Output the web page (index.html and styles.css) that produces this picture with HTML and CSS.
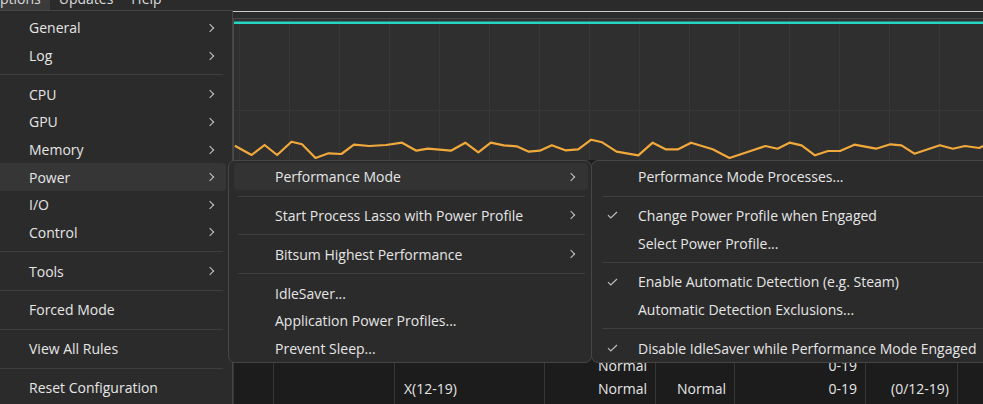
FILE: index.html
```html
<!DOCTYPE html>
<html lang="en">
<head>
    <meta charset="UTF-8">
    <title>Process Lasso - Options</title>
    <link rel="stylesheet" href="styles.css">
</head>
<body>
    <div class="app">
        <div class="menubar">
            <span class="mb-item open">Options</span>
            <span class="mb-item">Updates</span>
            <span class="mb-item">Help</span>
        </div>
        <div class="workspace">
            <div class="sidebar"></div>
            <div class="graph">
                <div class="plot">
                    <svg viewBox="0 0 749 141" preserveAspectRatio="none">
                        <g stroke="#373737" stroke-width="1">
                            <line x1="5.5" y1="0" x2="5.5" y2="141"/>
                            <line x1="55.5" y1="0" x2="55.5" y2="141"/>
                            <line x1="105.5" y1="0" x2="105.5" y2="141"/>
                            <line x1="155.5" y1="0" x2="155.5" y2="141"/>
                            <line x1="205.5" y1="0" x2="205.5" y2="141"/>
                            <line x1="255.5" y1="0" x2="255.5" y2="141"/>
                            <line x1="305.5" y1="0" x2="305.5" y2="141"/>
                            <line x1="355.5" y1="0" x2="355.5" y2="141"/>
                            <line x1="405.5" y1="0" x2="405.5" y2="141"/>
                            <line x1="455.5" y1="0" x2="455.5" y2="141"/>
                            <line x1="505.5" y1="0" x2="505.5" y2="141"/>
                            <line x1="555.5" y1="0" x2="555.5" y2="141"/>
                            <line x1="605.5" y1="0" x2="605.5" y2="141"/>
                            <line x1="655.5" y1="0" x2="655.5" y2="141"/>
                            <line x1="705.5" y1="0" x2="705.5" y2="141"/>
                            <line x1="0" y1="91.5" x2="749" y2="91.5"/>
                        </g>
                        <line x1="0" y1="3.8" x2="749" y2="3.8" stroke="#25d4c3" stroke-width="2.4"/>
                        <polyline fill="none" stroke="#f2a93b" stroke-width="2.2" stroke-linejoin="round"
                            points="0.8,126.7 17.6,136 30.6,126 43.1,136 57.5,122.7 68,125.3 81.5,139 94.5,134.3 107.4,135 119.9,125.7 135.3,127 152.1,126 168,123.7 182.4,131.7 193.9,129.7 216.9,131.7 231.3,123.7 244.3,133.3 256.8,123.7 269.8,126.3 282.7,127.3 294.8,132.7 305.8,131.7 317.8,126.3 331.3,131.3 344.2,130.3 357.2,120.7 368.2,123.3 382.6,132.7 404.3,136.3 418.7,123.7 431.6,130.3 444.1,130.3 457.1,123.7 478.7,130.3 495.5,139 519.5,131 531.5,127 543.5,129.7 555.5,123.7 567.6,126.3 581,136.3 594,132 606,132 620.4,125.7 642,129.7 656.4,125.3 667.5,126.3 680.4,134.7 705.9,126.3 718.9,129.7 730.9,127 745.3,129 749,127"/>
                    </svg>
                </div>
            </div>
        </div>
        <div class="rules">
            <div class="col"></div>
            <div class="col"><div class="cell"></div><div class="cell"></div></div>
            <div class="col"><div class="cell"></div><div class="cell"></div></div>
            <div class="col left"><div class="cell"></div><div class="cell">X(12-19)</div></div>
            <div class="col"><div class="cell">Normal</div><div class="cell">Normal</div></div>
            <div class="col"><div class="cell"></div><div class="cell">Normal</div></div>
            <div class="col"><div class="cell">0-19</div><div class="cell">0-19</div></div>
            <div class="col"><div class="cell"></div><div class="cell">(0/12-19)</div></div>
            <div class="col"></div>
        </div>
    </div>

    <!-- Options menu -->
    <div class="menu main-menu">
        <div class="mi sub">General</div>
        <div class="mi sub">Log</div>
        <div class="sep"></div>
        <div class="mi sub">CPU</div>
        <div class="mi sub">GPU</div>
        <div class="mi sub">Memory</div>
        <div class="mi sub hot">Power</div>
        <div class="mi sub">I/O</div>
        <div class="mi sub">Control</div>
        <div class="sep"></div>
        <div class="mi sub">Tools</div>
        <div class="sep"></div>
        <div class="mi">Forced Mode</div>
        <div class="sep"></div>
        <div class="mi">View All Rules</div>
        <div class="sep"></div>
        <div class="mi">Reset Configuration</div>
    </div>

    <!-- Power submenu -->
    <div class="menu power-menu">
        <div class="si sub hot">Performance Mode</div>
        <div class="sep"></div>
        <div class="si sub">Start Process Lasso with Power Profile</div>
        <div class="sep"></div>
        <div class="si sub">Bitsum Highest Performance</div>
        <div class="sep"></div>
        <div class="si">IdleSaver...</div>
        <div class="si">Application Power Profiles...</div>
        <div class="si">Prevent Sleep...</div>
    </div>

    <!-- Performance Mode submenu -->
    <div class="menu perf-menu">
        <div class="si"><span class="check"></span>Performance Mode Processes...</div>
        <div class="sep"></div>
        <div class="si"><span class="check"><svg viewBox="0 0 11 8" width="11" height="8"><polyline points="1,4.2 3.8,7 10,1" fill="none" stroke="#bdbdbd" stroke-width="1.2"/></svg></span>Change Power Profile when Engaged</div>
        <div class="si"><span class="check"></span>Select Power Profile...</div>
        <div class="sep"></div>
        <div class="si"><span class="check"><svg viewBox="0 0 11 8" width="11" height="8"><polyline points="1,4.2 3.8,7 10,1" fill="none" stroke="#bdbdbd" stroke-width="1.2"/></svg></span>Enable Automatic Detection (e.g. Steam)</div>
        <div class="si"><span class="check"></span>Automatic Detection Exclusions...</div>
        <div class="sep"></div>
        <div class="si"><span class="check"><svg viewBox="0 0 11 8" width="11" height="8"><polyline points="1,4.2 3.8,7 10,1" fill="none" stroke="#bdbdbd" stroke-width="1.2"/></svg></span>Disable IdleSaver while Performance Mode Engaged</div>
    </div>
</body>
</html>
```

FILE: styles.css
```css
body {
    margin: 0;
    height: 404px;
    overflow: hidden;
    background-color: #1c1c1c;
    font-family: "Open Sans", "Noto Sans", sans-serif;
    font-size: 14px;
    color: #e6e6e6;
}
.app {
    display: flex;
    flex-direction: column;
    height: 404px;
}

/* top menu bar, scrolled off the top edge */
.menubar {
    display: flex;
    height: 11px;
    margin-left: -20px;
    overflow: hidden;
    background-color: #2b2b2b;
    border-bottom: 1px solid #c9c9c9;
}
.mb-item {
    padding: 0 9px;
    margin-top: -11px;
    line-height: 20px;
    color: #dcdcdc;
}
.mb-item.open {
    background-color: #3b3b3b;
}

/* graph */
.workspace {
    display: flex;
    height: 148px;
    background-color: #2b2b2b;
}
.sidebar {
    width: 233px;
}
.graph {
    flex: 1;
    padding-top: 6px;
}
.plot {
    height: 141px;
    background-color: #2f2f2f;
    border-top: 1px solid #474747;
    border-left: 1px solid #4a4a4a;
}
.plot svg {
    display: block;
    width: 100%;
    height: 141px;
}

/* rules table */
.rules {
    flex: 1;
    display: grid;
    grid-template-columns: 233px 40px 121px 150px 111px 79px 131px 92px 1fr;
    background-color: #1c1c1c;
}
.col {
    display: flex;
    flex-direction: column;
    justify-content: flex-end;
    padding-bottom: 4px;
    border-left: 1px solid #363636;
}
.col:first-child {
    border-left: none;
}
.cell {
    height: 23px;
    line-height: 23px;
    padding: 0 8px;
    text-align: right;
    white-space: nowrap;
}
.col.left .cell {
    text-align: left;
    padding-left: 9px;
}

/* popup menus */
.menu {
    position: absolute;
    box-sizing: border-box;
    background-color: #2b2b2b;
    border: 1px solid #464646;
    white-space: nowrap;
}
.sep {
    display: flex;
    align-items: center;
    height: 11.2px;
}
.sep::before {
    content: '';
    flex: 1;
    height: 1px;
    background-color: #3e3e3e;
}
.sub::after {
    content: '';
    box-sizing: border-box;
    width: 6px;
    height: 6px;
    margin-left: auto;
    border-top: 1.3px solid #c8c8c8;
    border-right: 1.3px solid #c8c8c8;
    transform: rotate(45deg);
}

.main-menu {
    left: 0;
    top: 10px;
    width: 233px;
    height: 400px;
    padding-top: 3.2px;
    border-left: none;
}
.mi {
    display: flex;
    align-items: center;
    height: 27.6px;
    padding-left: 29px;
    margin-right: 6px;
    border-radius: 0 4px 4px 0;
}
.mi.hot {
    background-color: #363636;
}
.mi.sub::after {
    margin-right: 13px;
}
.main-menu .sep {
    margin-right: 9px;
}

.si {
    display: flex;
    align-items: center;
    height: 27.6px;
    padding-left: 41px;
    border-radius: 4px;
}
.si.hot {
    background-color: #333333;
}
.si.sub::after {
    margin-right: 14px;
}

.power-menu {
    left: 228px;
    top: 160px;
    width: 364px;
    padding: 1.9px 3px 0 5px;
    border-radius: 7px;
}
.power-menu .sep {
    margin: 0 3px 0 4px;
}

.perf-menu {
    left: 591px;
    top: 160px;
    width: 430px;
    padding: 1.9px 0 0 5px;
    border-radius: 7px 0 0 7px;
}
.perf-menu .si {
    padding-left: 10px;
}
.perf-menu .sep {
    margin-left: 5px;
}
.check {
    display: flex;
    align-items: center;
    width: 31px;
    height: 100%;
}
```
